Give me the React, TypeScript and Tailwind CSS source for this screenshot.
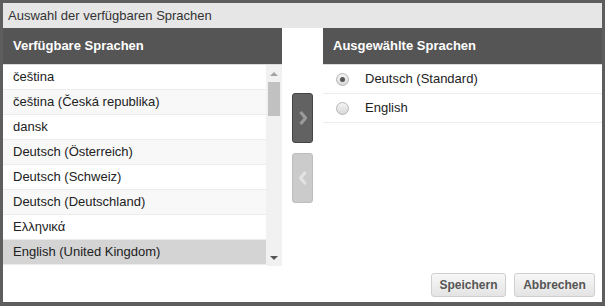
import React from 'react';

const available = [
  'čeština',
  'čeština (Česká republika)',
  'dansk',
  'Deutsch (Österreich)',
  'Deutsch (Schweiz)',
  'Deutsch (Deutschland)',
  'Ελληνικά',
  'English (United Kingdom)',
];

const selected = [
  { name: 'Deutsch (Standard)', checked: true },
  { name: 'English', checked: false },
];

const Chevron = ({ dir, color }: { dir: 'left' | 'right'; color: string }) => (
  <svg width="8" height="14" viewBox="0 0 8 14">
    <path
      d={dir === 'right' ? 'M1.5 1 L6.5 7 L1.5 13' : 'M6.5 1 L1.5 7 L6.5 13'}
      fill="none"
      stroke={color}
      strokeWidth={3.2}
      strokeLinejoin="miter"
    />
  </svg>
);

const Radio = ({ checked }: { checked: boolean }) => (
  <span className="flex h-[13px] w-[13px] items-center justify-center rounded-full border border-[#b5b5b5] bg-gradient-to-b from-[#f4f4f4] to-[#d8d8d8]">
    {checked && <span className="h-[5px] w-[5px] rounded-full bg-[#555]" />}
  </span>
);

export default function App() {
  return (
    <div
      className="h-[306px] w-[605px] bg-[#5e5e5e] pl-[3px] pt-[3px]"
      style={{ fontFamily: '"Liberation Sans", Arial, sans-serif' }}
    >
      <div className="flex h-[299px] w-[599px] flex-col bg-white">
        {/* Titelleiste */}
        <div className="flex h-[25px] items-center bg-[#e6e6e6] pl-[5px] text-[13px] text-[#333]">
          Auswahl der verfügbaren Sprachen
        </div>

        <div className="flex">
          {/* Verfügbare Sprachen */}
          <div className="flex w-[279px] flex-col">
            <div className="flex h-[37px] items-center border-b border-[#dcdcdc] bg-[#555] pl-[10px] text-[13px] font-bold text-white">
              Verfügbare Sprachen
            </div>
            <div className="flex h-[201px]">
              <div className="flex flex-1 flex-col">
                {available.map((lang, i) => (
                  <div
                    key={lang}
                    className={
                      'flex h-[25px] shrink-0 items-center border-b border-[#ececec] pl-[10px] text-[13px] text-[#222] ' +
                      (i === 7 ? 'bg-[#d4d4d4]' : i % 2 === 1 ? 'bg-[#f8f8f8]' : 'bg-white')
                    }
                  >
                    {lang}
                  </div>
                ))}
              </div>
              {/* Scrollbar */}
              <div className="flex w-[16px] flex-col items-center bg-[#f1f1f1]">
                <div className="flex h-[17px] items-center justify-center">
                  <span className="h-0 w-0 border-x-[4px] border-b-[4px] border-x-transparent border-b-[#a3a3a3]" />
                </div>
                <div className="h-[34px] w-[12px] bg-[#c1c1c1]" />
                <div className="flex-1" />
                <div className="flex h-[17px] items-center justify-center">
                  <span className="h-0 w-0 border-x-[4px] border-t-[4px] border-x-transparent border-t-[#555]" />
                </div>
              </div>
            </div>
          </div>

          {/* Pfeiltasten */}
          <div className="flex w-[41px] flex-col items-center pt-[65px]">
            <div className="flex h-[50px] w-[21px] items-center justify-center rounded-[3px] border border-[#444] bg-[#626262]">
              <Chevron dir="right" color="#9a9a9a" />
            </div>
            <div className="mt-[10px] flex h-[50px] w-[21px] items-center justify-center rounded-[3px] border border-[#bdbdbd] bg-[#cbcbcb]">
              <Chevron dir="left" color="#e2e2e2" />
            </div>
          </div>

          {/* Ausgewählte Sprachen */}
          <div className="flex flex-1 flex-col">
            <div className="flex h-[37px] items-center border-b border-[#dcdcdc] bg-[#555] pl-[10px] text-[13px] font-bold text-white">
              Ausgewählte Sprachen
            </div>
            {selected.map((s) => (
              <div
                key={s.name}
                className="flex h-[29px] items-center border-b border-[#ececec] pl-[13px] text-[13px] text-[#222]"
              >
                <Radio checked={s.checked} />
                <span className="ml-[16px]">{s.name}</span>
              </div>
            ))}
          </div>
        </div>

        {/* Fußzeile */}
        <div className="mt-auto flex justify-end gap-[8px] pb-[5px] pr-[7px]">
          <button className="h-[24px] w-[75px] rounded-[3px] border border-[#cfcfcf] bg-gradient-to-b from-[#f7f7f7] to-[#e4e4e4] text-[12px] font-bold text-[#555]">
            Speichern
          </button>
          <button className="h-[24px] w-[81px] rounded-[3px] border border-[#cfcfcf] bg-gradient-to-b from-[#f7f7f7] to-[#e4e4e4] text-[12px] font-bold text-[#555]">
            Abbrechen
          </button>
        </div>
      </div>
    </div>
  );
}
